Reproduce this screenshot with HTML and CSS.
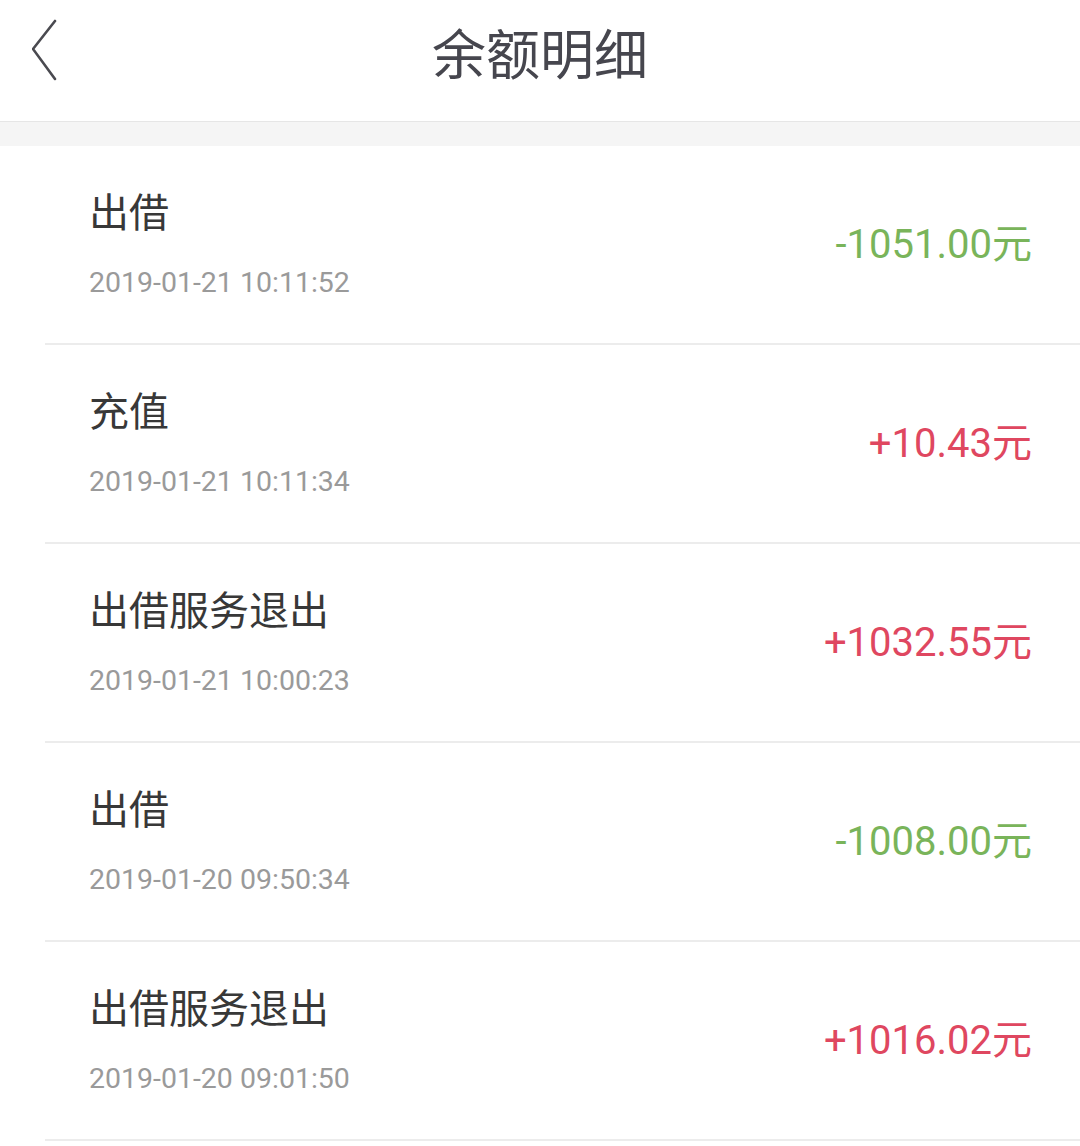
FILE: index.html
```html
<!DOCTYPE html>
<html lang="zh-CN">
<head>
  <meta charset="UTF-8" />
  <meta name="viewport" content="width=device-width, initial-scale=1.0" />
  <title>余额明细</title>
  <link rel="stylesheet" href="styles.css">
</head>
<body>
  <div class="header">
    <a class="back" href="#">
      <svg width="30" height="64" viewBox="0 0 30 64">
        <polyline points="23,3 1,31 23,61" fill="none" stroke="#4a4a50" stroke-width="2.6" stroke-linecap="round" stroke-linejoin="round" />
      </svg>
    </a>
    <h1>余额明细</h1>
  </div>
  <div class="gap"></div>

  <ul class="list">
    <li class="item">
      <div class="info">
        <div class="name">出借</div>
        <div class="time">2019-01-21 10:11:52</div>
      </div>
      <div class="amount out">-1051.00元</div>
    </li>
    <li class="item">
      <div class="info">
        <div class="name">充值</div>
        <div class="time">2019-01-21 10:11:34</div>
      </div>
      <div class="amount in">+10.43元</div>
    </li>
    <li class="item">
      <div class="info">
        <div class="name">出借服务退出</div>
        <div class="time">2019-01-21 10:00:23</div>
      </div>
      <div class="amount in">+1032.55元</div>
    </li>
    <li class="item">
      <div class="info">
        <div class="name">出借</div>
        <div class="time">2019-01-20 09:50:34</div>
      </div>
      <div class="amount out">-1008.00元</div>
    </li>
    <li class="item">
      <div class="info">
        <div class="name">出借服务退出</div>
        <div class="time">2019-01-20 09:01:50</div>
      </div>
      <div class="amount in">+1016.02元</div>
    </li>
  </ul>
</body>
</html>
```

FILE: styles.css
```css
body {
  margin: 0;
  background-color: #fff;
  font-family: Roboto, "Noto Sans CJK SC", sans-serif;
  overflow: hidden;
}
.header {
  height: 121px;
  border-bottom: 1px solid #e6e6e6;
  display: flex;
  justify-content: center;
  position: relative;
}
.header h1 {
  margin: 0;
  font-family: "Noto Sans CJK SC", sans-serif;
  font-size: 54px;
  font-weight: 400;
  line-height: 104px;
  color: #46464e;
}
.back {
  position: absolute;
  left: 32px;
  top: 18px;
  display: block;
}
.gap {
  height: 24px;
  background-color: #f5f5f5;
}
.list {
  list-style: none;
  margin: 0;
  padding: 0;
}
.item {
  box-sizing: border-box;
  height: 199px;
  margin-left: 45px;
  padding: 0 48px 0 44px;
  border-bottom: 2px solid #ececec;
  display: flex;
  align-items: center;
  justify-content: space-between;
}
.info {
  display: flex;
  flex-direction: column;
  gap: 29px;
}
.name {
  font-family: "Noto Sans CJK SC", sans-serif;
  font-size: 40px;
  line-height: 48px;
  color: #383838;
}
.time {
  font-size: 28.5px;
  line-height: 40px;
  color: #9a9a9a;
}
.amount {
  font-size: 40px;
  line-height: 48px;
}
.amount.out {
  color: #79b45a;
}
.amount.in {
  color: #df4760;
}
```
